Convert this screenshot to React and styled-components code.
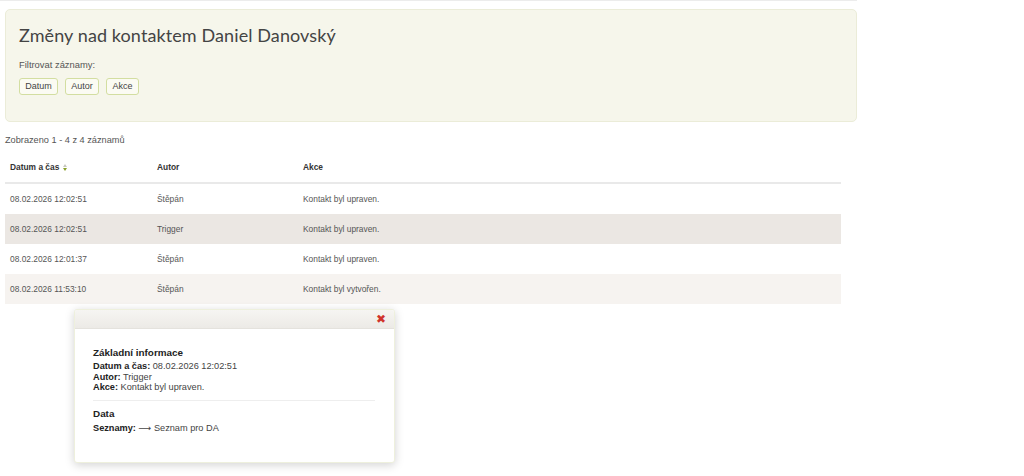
import React from "react";
import styled, { createGlobalStyle } from "styled-components";

const Global = createGlobalStyle`
  html, body { margin: 0; padding: 0; background: #fff; }
  body { font-family: "Liberation Sans", Arial, sans-serif; color: #555; font-size: 9.2px; }
`;

const Page = styled.div`
  width: 857px;
  border-top: 1px solid #ececec;
  padding: 8px 0 0 5px;
  box-sizing: border-box;
  position: relative;
  height: 476px;
`;

const Panel = styled.div`
  width: 852px;
  height: 113px;
  box-sizing: border-box;
  background: #f6f6eb;
  border: 1px solid #ebecd8;
  border-radius: 5px;
  padding: 12px 13px;
`;

const Title = styled.h1`
  margin: 0;
  font-family: Lato, "Open Sans", sans-serif;
  font-weight: 400;
  font-size: 18px;
  line-height: 26px;
  color: #444;
  letter-spacing: 0.1px;
`;

const FilterLabel = styled.div`
  margin-top: 10px;
  font-size: 9.4px;
  color: #555;
  line-height: 14px;
`;

const FilterRow = styled.div`
  display: flex;
  gap: 7px;
  margin-top: 6px;
`;

const FilterButton = styled.button`
  font-family: "Liberation Sans", Arial, sans-serif;
  font-size: 9px;
  color: #444;
  background: #fbfbf3;
  border: 1px solid #d3dea1;
  border-radius: 3px;
  height: 17px;
  width: ${p => p.$w}px;
  padding: 0;
  line-height: 15px;
`;

const Summary = styled.div`
  margin-top: 11px;
  font-size: 9.2px;
  color: #555;
  line-height: 14px;
`;

const Table = styled.table`
  width: 836px;
  table-layout: fixed;
  border-collapse: collapse;
  margin-top: 5px;
  font-size: 8.4px;
`;

const HeadCell = styled.th`
  text-align: left;
  font-weight: 700;
  color: #333;
  height: 30px;
  padding: 0 0 0 5px;
  border-bottom: 2px solid #e9e9e9;
  width: ${p => p.$w || "auto"};
`;

const Row = styled.tr`
  background: ${p => p.$bg || "#fff"};
`;

const Cell = styled.td`
  height: 30px;
  padding: 0 0 0 5px;
  color: #555;
`;

const SortIcon = styled.span`
  display: inline-flex;
  flex-direction: column;
  vertical-align: middle;
  margin-left: 4px;
  gap: 1px;
`;

const Tri = styled.span`
  width: 0;
  height: 0;
  border-left: 2.5px solid transparent;
  border-right: 2.5px solid transparent;
  ${p => p.$up ? `border-bottom: 3px solid #c8c8c0;` : `border-top: 3px solid #8aa12a;`}
`;

const Popup = styled.div`
  position: absolute;
  left: 74px;
  top: 308px;
  width: 321px;
  height: 154px;
  box-sizing: border-box;
  background: #fff;
  border: 1px solid #eef0dd;
  border-radius: 3px;
  box-shadow: 0 2px 10px rgba(0,0,0,0.18);
  overflow: hidden;
`;

const PopupHead = styled.div`
  height: 18px;
  background: linear-gradient(#f6f5f2, #eceae6);
  border-bottom: 1px solid #e4e2dd;
  display: flex;
  justify-content: flex-end;
  align-items: center;
  padding-right: 8px;
`;

const Close = styled.span`
  color: #d0342c;
  font-size: 12px;
  font-weight: 700;
  line-height: 1;
  font-family: "DejaVu Sans", sans-serif;
`;

const PopupBody = styled.div`
  padding: 17px 19px 0 18px;
  color: #333;
  font-size: 9.2px;
`;

const SectionTitle = styled.div`
  font-weight: 700;
  font-size: 9.9px;
  color: #222;
  line-height: 13px;
  margin-bottom: ${p => p.$mb ?? 2}px;
`;

const Line = styled.div`
  line-height: 10.5px;
  color: #444;
  b { color: #222; }
`;

const Arrow = styled.span`
  font-family: "DejaVu Sans", sans-serif;
  font-size: 9px;
`;

const Divider = styled.hr`
  border: 0;
  border-top: 1px solid #eee;
  margin: 7px 0 6px;
`;

const rows = [
  ["08.02.2026 12:02:51", "Štěpán", "Kontakt byl upraven.", "#fff"],
  ["08.02.2026 12:02:51", "Trigger", "Kontakt byl upraven.", "#ebe7e3"],
  ["08.02.2026 12:01:37", "Štěpán", "Kontakt byl upraven.", "#fff"],
  ["08.02.2026 11:53:10", "Štěpán", "Kontakt byl vytvořen.", "#f6f3f0"],
];

export default function App() {
  return (
    <>
      <Global />
      <Page>
        <Panel>
          <Title>Změny nad kontaktem Daniel Danovský</Title>
          <FilterLabel>Filtrovat záznamy:</FilterLabel>
          <FilterRow>
            <FilterButton $w={39}>Datum</FilterButton>
            <FilterButton $w={34}>Autor</FilterButton>
            <FilterButton $w={33}>Akce</FilterButton>
          </FilterRow>
        </Panel>
        <Summary>Zobrazeno 1 - 4 z 4 záznamů</Summary>
        <Table>
          <thead>
            <tr>
              <HeadCell $w="142px">
                Datum a čas
                <SortIcon><Tri $up /><Tri /></SortIcon>
              </HeadCell>
              <HeadCell $w="141px">Autor</HeadCell>
              <HeadCell>Akce</HeadCell>
            </tr>
          </thead>
          <tbody>
            {rows.map((r, i) => (
              <Row key={i} $bg={r[3]}>
                <Cell>{r[0]}</Cell>
                <Cell>{r[1]}</Cell>
                <Cell>{r[2]}</Cell>
              </Row>
            ))}
          </tbody>
        </Table>
        <Popup>
          <PopupHead><Close>✖</Close></PopupHead>
          <PopupBody>
            <SectionTitle>Základní informace</SectionTitle>
            <Line><b>Datum a čas:</b> 08.02.2026 12:02:51</Line>
            <Line><b>Autor:</b> Trigger</Line>
            <Line><b>Akce:</b> Kontakt byl upraven.</Line>
            <Divider />
            <SectionTitle $mb={3}>Data</SectionTitle>
            <Line><b>Seznamy:</b> <Arrow>⟶</Arrow> Seznam pro DA</Line>
          </PopupBody>
        </Popup>
      </Page>
    </>
  );
}
